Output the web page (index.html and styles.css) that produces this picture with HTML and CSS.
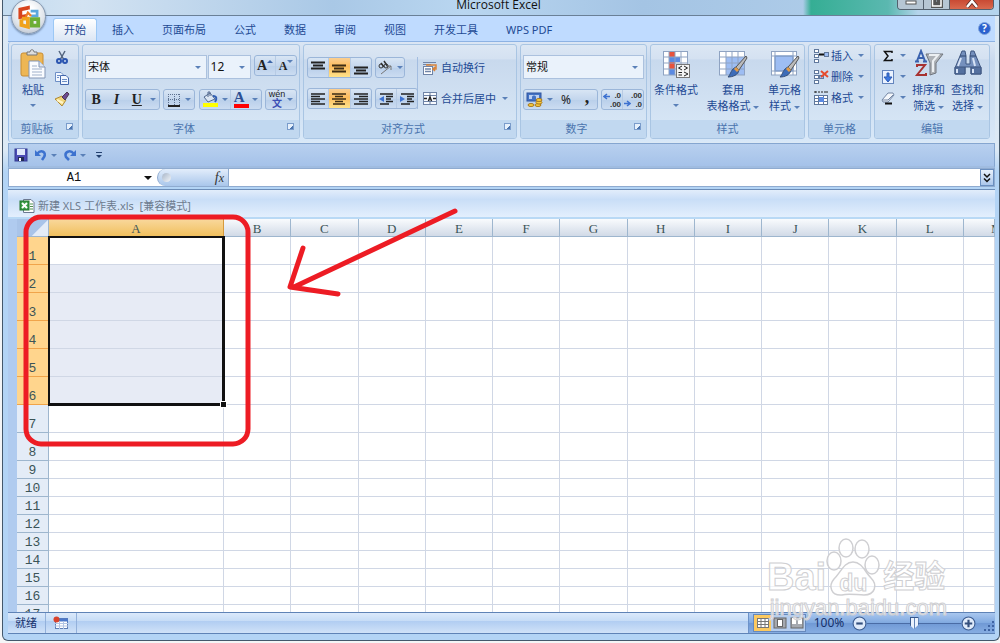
FILE: index.html
```html
<!DOCTYPE html>
<html lang="zh-CN">
<head>
  <meta charset="UTF-8" />
  <title>Microsoft Excel</title>
  <link rel="stylesheet" href="styles.css">
</head>
<body>
  <div class="window">
    <!-- Title bar -->
    <header class="titlebar">
      <span class="title">Microsoft Excel</span>
      <div class="window-buttons">
        <button class="win-btn" aria-label="最小化"><svg width="12" height="6" viewBox="0 0 12 6"><rect x="1" y="1" width="10" height="3" fill="#fff" stroke="#555" /></svg></button>
        <button class="win-btn" aria-label="还原"><svg width="12" height="8" viewBox="0 0 12 8"><path d="M1 0V6.500H10.500V0M4 0V3.500H7.500V0" fill="none" stroke="#555" stroke-width="3" /><path d="M1.500 0V6H10V0" fill="none" stroke="#fff" stroke-width="1.500" /></svg></button>
        <button class="win-btn close" aria-label="关闭"><svg width="12" height="8" viewBox="0 0 12 8"><path d="M1 7L6 1L11 7" fill="none" stroke="#5a2b25" stroke-width="4" /><path d="M1 7L6 1L11 7" fill="none" stroke="#fff" stroke-width="2.500" /></svg></button>
      </div>
    </header>

    <button class="office-button" aria-label="Office 按钮">
      <svg width="26" height="26" viewBox="0 0 24 24" fill="none" stroke-width="3.500">
        <path d="M11 5V3.500L4 5V12L10 11" stroke="#d8441c" />
        <path d="M13.500 6.500H19.500V11H14" stroke="#5aa7dc" stroke-width="2.500" />
        <path d="M5 14V19.500L11 21V13.500H5.500" stroke="#f0a21c" />
        <path d="M14.500 14H20.500V20H14.500Z" stroke="#6cae35" />
        <path d="M9 12L11 8L14 11" stroke="#f07c24" stroke-width="2" />
      </svg>
    </button>

    <!-- Ribbon tabs -->
    <nav class="tabs">
      <button class="tab active">开始</button>
      <button class="tab">插入</button>
      <button class="tab">页面布局</button>
      <button class="tab">公式</button>
      <button class="tab">数据</button>
      <button class="tab">审阅</button>
      <button class="tab">视图</button>
      <button class="tab">开发工具</button>
      <button class="tab">WPS PDF</button>
      <button class="help" aria-label="帮助">?</button>
    </nav>

    <!-- Ribbon -->
    <div class="ribbon">
      <section class="group clipboard">
        <div class="group-body">
          <button class="big-btn">
            <svg width="28" height="30" viewBox="0 0 28 30">
              <rect x="2" y="4" width="22" height="23" rx="2" fill="#edb654" stroke="#c98d33" />
              <path d="M8 6V3H11C11 0 15 0 15 3H18V6Z" fill="#ddd" stroke="#777" />
              <path d="M10 12H20L26 18V29H10Z" fill="#fafcff" stroke="#8396b5" />
              <path d="M20 12V18H26" fill="#dbe4f2" stroke="#8396b5" />
              <path d="M13 17H18M13 20H23M13 23H23M13 26H23" stroke="#9fb0ca" />
            </svg>
            <span>粘贴</span>
            <i class="caret"></i>
          </button>
          <div class="mini-stack">
            <button aria-label="剪切"><svg width="16" height="16" viewBox="0 0 16 16" fill="none"><path d="M5 2L10 11M11 2L6 11" stroke="#54657f" stroke-width="1.500" /><circle cx="5" cy="12" r="2" stroke="#2b55b0" stroke-width="2" /><circle cx="11" cy="12" r="2" stroke="#2b55b0" stroke-width="2" /></svg></button>
            <button aria-label="复制"><svg width="16" height="16" viewBox="0 0 16 16"><path d="M1.500 2.500H7L9.500 5V11.500H1.500Z" fill="#f2f7ff" stroke="#6d8fc6" /><path d="M6.500 5.500H12L14.500 8V14.500H6.500Z" fill="#f2f7ff" stroke="#4468ad" /><path d="M3 5.500H6M3 7.500H5M8 9.500H13M8 11.500H13" stroke="#6d8fc6" /></svg></button>
            <button aria-label="格式刷"><svg width="16" height="16" viewBox="0 0 16 16"><path d="M1 8L8 5L12 9L8 15Z" fill="#f1d67b" stroke="#b08a35" /><path d="M3 9L9 12" stroke="#fff5c8" stroke-width="2" /><path d="M8 6L13 1L15 3L11 9Z" fill="#6b4a91" stroke="#4f3a50" /></svg></button>
          </div>
        </div>
        <div class="caption">剪贴板<i class="launcher"></i></div>
      </section>

      <section class="group font">
        <div class="group-body rows">
          <div class="row">
            <span class="combo font-name"><select aria-label="字体"><option>宋体</option></select></span>
            <span class="combo font-size"><select aria-label="字号"><option>12</option></select></span>
            <div class="segment sizes">
              <button class="serif grow">A<i class="up"></i></button>
              <button class="serif shrink">A<i class="caret"></i></button>
            </div>
          </div>
          <div class="row">
            <div class="segment biu">
              <button class="serif">B</button>
              <button class="serif italic">I</button>
              <button class="serif underline">U</button>
              <button class="drop" aria-label="下划线选项"><i class="caret"></i></button>
            </div>
            <div class="segment pair">
              <button aria-label="边框"><svg width="14" height="14" viewBox="0 0 14 14"><path d="M1.500 1V13M7.500 1V13M12.500 1V13M1 1.500H13M1 6.500H13" stroke="#5d718f" stroke-dasharray="1 1" /><path d="M1 13H13" stroke="#222" stroke-width="2" /></svg><i class="caret"></i></button>
            </div>
            <div class="segment colors">
              <button aria-label="填充颜色"><svg width="16" height="17" viewBox="0 0 16 17"><path d="M2 6L8 2L13 8L6 11Z" fill="#dbe6f3" stroke="#52698e" /><path d="M6 6V1H8V5" fill="none" stroke="#52698e" /><path d="M11 5C15 5 15 8 13 11" fill="none" stroke="#315fb3" stroke-width="2" /><rect x="1" y="12" width="15" height="4" fill="#ffff00" /></svg><i class="caret"></i></button>
              <button class="serif color-a" aria-label="字体颜色">A<i class="caret"></i></button>
            </div>
            <div class="segment pair">
              <button class="phonetic"><span>wén<b>文</b></span><i class="caret"></i></button>
            </div>
          </div>
        </div>
        <div class="caption">字体<i class="launcher"></i></div>
      </section>

      <section class="group align">
        <div class="group-body">
          <div class="align-left">
            <div class="row">
              <div class="segment three">
                <button aria-label="顶端对齐"><svg width="14" height="14" viewBox="0 0 14 14"><path d="M0 1.500H14M2 4.500H12M0 7.500H14" stroke="#222" stroke-width="2" /></svg></button>
                <button class="on" aria-label="垂直居中"><svg width="14" height="14" viewBox="0 0 14 14"><path d="M0 4.500H14M2 7.500H12M0 10.500H14" stroke="#3d2d15" stroke-width="2" /></svg></button>
                <button aria-label="底端对齐"><svg width="14" height="14" viewBox="0 0 14 14"><path d="M0 6.500H14M2 9.500H12M0 12.500H14" stroke="#222" stroke-width="2" /></svg></button>
              </div>
              <div class="segment orient">
                <button aria-label="方向"><svg width="16" height="16" viewBox="0 0 16 16" fill="none" stroke="#333"><circle cx="4" cy="6" r="2" /><path d="M4 3L7 7M7 1L11 7" stroke-width="1.500" /><circle cx="9" cy="6" r="2" /><path d="M4 14L14 6M14 10V6H10" stroke="#777" /></svg><i class="caret"></i></button>
              </div>
            </div>
            <div class="row">
              <div class="segment three">
                <button aria-label="左对齐"><svg width="14" height="14" viewBox="0 0 14 14"><path d="M0 2H14M0 4.500H9M0 7H14M0 9.500H9M0 12H14" stroke="#222" stroke-width="1.500" /></svg></button>
                <button class="on" aria-label="居中"><svg width="14" height="14" viewBox="0 0 14 14"><path d="M0 2H14M3 4.500H11M0 7H14M3 9.500H11M1 12H13" stroke="#3d2d15" stroke-width="1.500" /></svg></button>
                <button aria-label="右对齐"><svg width="14" height="14" viewBox="0 0 14 14"><path d="M0 2H14M5 4.500H14M0 7H14M5 9.500H14M0 12H14" stroke="#222" stroke-width="1.500" /></svg></button>
              </div>
              <div class="segment two">
                <button aria-label="减少缩进量"><svg width="16" height="14" viewBox="0 0 16 14"><path d="M2 2H15M8 4.500H15M8 7H13M8 9.500H15M2 12H11" stroke="#222" stroke-width="1.500" /><path d="M6 4L1 7L6 10Z" fill="#3c71d0" /></svg></button>
                <button aria-label="增加缩进量"><svg width="16" height="14" viewBox="0 0 16 14"><path d="M2 2H15M8 4.500H15M8 7H13M8 9.500H15M2 12H11" stroke="#222" stroke-width="1.500" /><path d="M1 4L6 7L1 10Z" fill="#3c71d0" /></svg></button>
              </div>
            </div>
          </div>
          <div class="align-right">
            <button class="text-btn"><svg width="16" height="16" viewBox="0 0 16 16"><path d="M1 2.500H14M1 4.500H9" stroke="#6f84a7" /><rect x="1.500" y="6.500" width="9" height="8" fill="#fff" stroke="#6f84a7" /><path d="M3 9H9M3 11.500H9" stroke="#6f84a7" stroke-width="1.500" /><path d="M4 5H14V9H11M13 7L11 9L13 11" fill="none" stroke="#d9843b" stroke-width="1.500" /></svg><span>自动换行</span></button>
            <button class="text-btn"><svg width="16" height="16" viewBox="0 0 16 16"><rect x="1.500" y="1.500" width="13" height="12" fill="#f8fbff" stroke="#6f84a7" /><path d="M8 1V4M8 11V14M1 4.500H15M1 10.500H15" stroke="#6f84a7" /><path d="M2 7.500H5M11 7.500H14M6.500 10L8 6L9.500 10" fill="none" stroke="#222" stroke-width="1.500" /></svg><span>合并后居中</span><i class="caret"></i></button>
          </div>
        </div>
        <div class="caption">对齐方式<i class="launcher"></i></div>
      </section>

      <section class="group number">
        <div class="group-body rows">
          <div class="row">
            <span class="combo format"><select aria-label="数字格式"><option>常规</option></select></span>
          </div>
          <div class="row">
            <div class="segment money">
              <button aria-label="会计数字格式"><svg width="17" height="17" viewBox="0 0 17 17"><rect x="1" y="2" width="14" height="8" fill="#4473c4" stroke="#2f55a0" /><rect x="3" y="4" width="10" height="4" fill="#bcd0f2" /><path d="M6 6C6 4 10 4 10 6V8H6Z" fill="#4473c4" /><g fill="#f7cb3e" stroke="#a87920"><ellipse cx="12" cy="14" rx="3" ry="1.500" /><ellipse cx="13" cy="11.500" rx="3" ry="1.500" /><ellipse cx="13" cy="9" rx="3" ry="1.500" /><ellipse cx="5" cy="14" rx="3" ry="1.500" /></g></svg><i class="caret"></i></button>
              <button class="percent">%</button>
              <button class="serif comma">,</button>
            </div>
            <div class="segment two decimals">
              <button aria-label="增加小数位数"><svg width="7" height="16" viewBox="0 0 7 16"><path d="M7 4.500H2M4 2L1 4.500L4 7" fill="none" stroke="#3c71d0" stroke-width="1.500" /></svg><span>.0<br>.00</span></button>
              <button aria-label="减少小数位数"><svg width="7" height="16" viewBox="0 0 7 16"><path d="M0 11.500H5M3 9L6 11.500L3 14" fill="none" stroke="#3c71d0" stroke-width="1.500" /></svg><span>.00<br>.0</span></button>
            </div>
          </div>
        </div>
        <div class="caption">数字<i class="launcher"></i></div>
      </section>

      <section class="group styles">
        <div class="group-body">
          <button class="big-btn wide">
            <svg width="30" height="30" viewBox="0 0 30 30"><rect x="2" y="2" width="25" height="24" fill="#fff" /><rect x="8" y="2" width="6" height="24" fill="#e8533c" /><rect x="8" y="8" width="11" height="5" fill="#5b8ae2" /><rect x="8" y="20" width="6" height="6" fill="#5b8ae2" /><path d="M2 2.500H27M2 8H27M2 14H27M2 20H27M2 26H27M2.500 2V26M8 2V26M14 2V26M20 2V26M26.500 2V26" stroke="#8fa3c2" /><rect x="15.500" y="15.500" width="13" height="13" fill="#f4f4f4" stroke="#777" /><path d="M21 17L17.500 19L21 21M23 17L26.500 19L23 21M17.500 23.500H21M17.500 26H21M23 23L27 25L23 27" fill="none" stroke="#222" /></svg>
            <span>条件格式</span>
            <i class="caret"></i>
          </button>
          <button class="big-btn wide">
            <svg width="30" height="30" viewBox="0 0 30 30"><rect x="1" y="2" width="26" height="24" fill="#fff" /><rect x="8" y="8" width="19" height="18" fill="#9dbdf3" /><path d="M1 2.500H27M1 8H27M1 14H27M1 20H27M1 26H27M1.500 2V26M8 2V26M14 2V26M20 2V26M26.500 2V26" stroke="#8fa3c2" /><path d="M28 7L29 9L21 21L18 18Z" fill="#bbb" stroke="#555" /><path d="M18 18L21 21C20 26 15 28 10 28C13 25 13 20 18 18Z" fill="#3c6cb8" stroke="#365078" /><path d="M17 19L20 22" stroke="#e39b45" stroke-width="3" /></svg>
            <span>套用<br>表格格式 <i class="caret"></i></span>
          </button>
          <button class="big-btn wide">
            <svg width="30" height="30" viewBox="0 0 30 30"><rect x="1" y="2" width="26" height="24" fill="#fff" /><rect x="5" y="7" width="18" height="15" fill="#9dbdf3" stroke="#5f88ca" /><path d="M1 2.500H27M1 26H27M1.500 2V26M26.500 2V26M5 2V26M23 2V26M1 7H27M1 22H27" stroke="#8fa3c2" /><path d="M28 7L29 9L21 21L18 18Z" fill="#bbb" stroke="#555" /><path d="M18 18L21 21C20 26 15 28 10 28C13 25 13 20 18 18Z" fill="#3c6cb8" stroke="#365078" /><path d="M17 19L20 22" stroke="#e39b45" stroke-width="3" /></svg>
            <span>单元格<br>样式 <i class="caret"></i></span>
          </button>
        </div>
        <div class="caption">样式</div>
      </section>

      <section class="group cells">
        <div class="group-body stack">
          <button class="text-btn"><svg width="16" height="16" viewBox="0 0 16 16" fill="#fff" stroke="#60789c"><rect x="1.500" y="1.500" width="4" height="3" /><rect x="1.500" y="6.500" width="4" height="3" /><rect x="1.500" y="11.500" width="4" height="3" /><rect x="11.500" y="4.500" width="4" height="4" fill="#9dbdf3" /><path d="M6 6.500H11" stroke="#111" stroke-width="2" /></svg><span>插入</span><i class="caret"></i></button>
          <button class="text-btn"><svg width="16" height="16" viewBox="0 0 16 16" fill="#fff" stroke="#60789c"><rect x="1.500" y="1.500" width="4" height="3" /><rect x="1.500" y="6.500" width="4" height="3" /><rect x="1.500" y="11.500" width="4" height="3" /><rect x="6.500" y="6.500" width="4" height="3" fill="#9dbdf3" /><path d="M8 2L15 8M15 2L8 8" stroke="#e64b2d" stroke-width="2" /></svg><span>删除</span><i class="caret"></i></button>
          <button class="text-btn"><svg width="16" height="16" viewBox="0 0 16 16" fill="#fff" stroke="#60789c"><path d="M2 1V3M14 1V3M2 2H14" stroke="#222" stroke-dasharray="2 1" /><rect x="1.500" y="5.500" width="13" height="9" /><path d="M1 8.500H15M1 11.500H15M5.500 5V15M10.500 5V15" /><rect x="6" y="7" width="5" height="5" fill="#5b8ae2" stroke="none" /></svg><span>格式</span><i class="caret"></i></button>
        </div>
        <div class="caption">单元格</div>
      </section>

      <section class="group editing">
        <div class="group-body">
          <div class="stack">
            <button class="text-btn" aria-label="求和"><svg width="16" height="16" viewBox="0 0 16 16"><path d="M12 5V3.500H4.500L8 8L4.500 12.500H12V11" fill="none" stroke="#111" stroke-width="1.500" /></svg><i class="caret"></i></button>
            <button class="text-btn" aria-label="填充"><svg width="16" height="16" viewBox="0 0 16 16"><rect x="2.500" y="1.500" width="11" height="13" fill="#eaf2ff" stroke="#6485bd" /><path d="M7 4H9V8H12L8 13L4 8H7Z" fill="#3e78e0" stroke="#2c5cb4" /></svg><i class="caret"></i></button>
            <button class="text-btn" aria-label="清除"><svg width="16" height="16" viewBox="0 0 16 16"><path d="M2 10L8 3H13L14 5L8 12H3Z" fill="#f4f7fb" stroke="#7487a5" /><path d="M3 10H8L13 5" fill="none" stroke="#7487a5" /><path d="M5 13.500H12" stroke="#111" stroke-width="2" /></svg><i class="caret"></i></button>
          </div>
          <button class="big-btn">
            <svg width="30" height="30" viewBox="0 0 30 30"><path d="M12 5H29L22 14V24L16 26V14Z" fill="#aeb2b7" stroke="#70757c" /><path d="M15 6H24L19 12V23" fill="none" stroke="#eceff2" stroke-width="2" /><path d="M3 12L7 2L11 12M5 9H10M1 12.500H5M9 12.500H13" fill="none" stroke="#3b62ae" stroke-width="2" /><path d="M3 18V16H11L3 26H12V24" fill="none" stroke="#a73232" stroke-width="2" /></svg>
            <span>排序和<br>筛选 <i class="caret"></i></span>
          </button>
          <button class="big-btn">
            <svg width="30" height="30" viewBox="0 0 30 30"><g fill="#7590bd" stroke="#3f5680"><path d="M7 7L9 2H12L13 7V15H17V7L18 2H21L23 7L28 19V25H18V18H12V25H2V19Z" /><path d="M2 18H12V25H2ZM18 18H28V25H18Z" fill="#54709f" /></g><path d="M8 9L5 17M20 9L22 17M4 20V24M20 20V24" stroke="#d7e3f6" stroke-width="2" /><path d="M7 7H13M17 7H23" stroke="#30466e" /></svg>
            <span>查找和<br>选择 <i class="caret"></i></span>
          </button>
        </div>
        <div class="caption">编辑</div>
      </section>
    </div>

    <!-- Quick access toolbar -->
    <div class="quick-access">
      <button aria-label="保存"><svg width="14" height="14" viewBox="0 0 14 14"><rect x="1" y="1" width="12" height="12" fill="#4b4bb5" stroke="#333a91" /><rect x="3" y="1" width="8" height="6" fill="#dfe8fb" /><rect x="4" y="9" width="6" height="4" fill="#222b55" /><rect x="5" y="10" width="2" height="3" fill="#fff" /></svg></button>
      <button aria-label="撤消"><svg width="14" height="14" viewBox="0 0 14 14"><path d="M3 6C7 1 13 4 10 9L8 12" fill="none" stroke="#3d72cf" stroke-width="2.500" /><path d="M1 2V8H7Z" fill="#3d72cf" /></svg></button>
      <i class="caret"></i>
      <button aria-label="恢复"><svg width="14" height="14" viewBox="0 0 14 14"><path d="M11 6C7 1 1 4 3 9L6 12" fill="none" stroke="#3d72cf" stroke-width="2.500" /><path d="M13 2V8H7Z" fill="#3d72cf" /></svg></button>
      <i class="caret"></i>
      <button class="customize" aria-label="自定义快速访问工具栏"><i class="caret"></i></button>
    </div>

    <!-- Formula bar -->
    <div class="formula-bar">
      <div class="name-box">
        <input type="text" value="A1" aria-label="名称框">
        <button aria-label="名称列表"><i class="caret"></i></button>
      </div>
      <div class="fx-area"><span class="knob"></span><button class="fx">f<small>x</small></button></div>
      <input class="formula" type="text" aria-label="编辑栏">
      <button class="expand" aria-label="展开编辑栏"><svg width="8" height="10" viewBox="0 0 8 10"><path d="M1 1L4 4L7 1M1 5.500L4 8.500L7 5.500" fill="none" stroke="#111" stroke-width="1.500" /></svg></button>
    </div>

    <!-- Workbook -->
    <main class="workbook">
      <div class="book-title">
        <svg width="16" height="16" viewBox="0 0 16 16"><path d="M4.500 1.500H12L15 4.500V14.500H4.500Z" fill="#fff" stroke="#6b7890" /><path d="M11 6H14M11 8.500H14M11 11H14" stroke="#4e9150" /><rect x="1" y="3" width="9" height="9" fill="#3a9b43" stroke="#23752e" /><path d="M3 5L8 10M8 5L3 10" stroke="#fff" stroke-width="2" /></svg>
        <span>新建 XLS 工作表.xls&nbsp; [兼容模式]</span>
      </div>
      <div class="sheet">
        <table class="grid">
          <colgroup id="cols"></colgroup>
          <thead><tr id="letters"></tr></thead>
          <tbody id="rows"></tbody>
        </table>
        <div class="selection"></div>
      </div>
    </main>

    <!-- Status bar -->
    <footer class="status">
      <span class="ready">就绪</span>
      <button class="macro" aria-label="录制宏"><svg width="16" height="14" viewBox="0 0 16 14"><rect x="2.500" y="2.500" width="12" height="10" fill="#fff" stroke="#5d7db5" /><path d="M2 4H15" stroke="#4c78c9" stroke-width="3" /><path d="M2 7.500H15M2 10H15M6.500 5V13M10.500 5V13" stroke="#b3c5e4" /><circle cx="3.500" cy="3.500" r="3" fill="#d9432c" /></svg></button>
      <div class="view-zone">
        <div class="views">
          <button class="on" aria-label="普通"><svg width="14" height="12" viewBox="0 0 14 12"><rect x="1" y="1" width="12" height="10" fill="#fff" /><path d="M1 1.500H13M1 4.500H13M1 7.500H13M1 10.500H13M1.500 1V11M5 1V11M9 1V11M12.500 1V11" stroke="#777" /></svg></button>
          <button aria-label="页面布局"><svg width="14" height="12" viewBox="0 0 14 12"><rect x="1" y="1" width="12" height="10" fill="#a5a9b0" stroke="#666" /><rect x="4.500" y="2.500" width="5" height="7" fill="#fff" stroke="#666" /></svg></button>
          <button aria-label="分页预览"><svg width="14" height="12" viewBox="0 0 14 12"><rect x="1" y="1" width="12" height="10" fill="#a5a9b0" stroke="#666" /><rect x="2" y="1" width="4" height="6" fill="#fff" /><rect x="8" y="1" width="4" height="6" fill="#fff" /></svg></button>
        </div>
        <button class="percent-btn">100%</button>
        <button class="round" aria-label="缩小"><svg width="15" height="15" viewBox="0 0 14 14"><circle cx="7" cy="7" r="6" fill="#dfeafa" stroke="#3c5c90" /><path d="M4 7H10" stroke="#344f7d" stroke-width="2" /></svg></button>
        <input class="zoom" type="range" min="10" max="190" value="100" aria-label="显示比例">
        <button class="round" aria-label="放大"><svg width="15" height="15" viewBox="0 0 14 14"><circle cx="7" cy="7" r="6" fill="#dfeafa" stroke="#3c5c90" /><path d="M3.500 7H10.500M7 3.500V10.500" stroke="#344f7d" stroke-width="2" /></svg></button>
        <svg class="grip" width="12" height="12" viewBox="0 0 12 12" fill="#3f64a3"><path d="M9 1h2v2h-2zM5 5h2v2h-2zM9 5h2v2h-2zM1 9h2v2h-2zM5 9h2v2h-2zM9 9h2v2h-2z" /></svg>
      </div>
    </footer>
  </div>

  <!-- Hand-drawn notes over the sheet -->
  <svg class="markup" width="440" height="240" viewBox="0 0 440 240" fill="none" stroke="#ed1c24" stroke-width="5" stroke-linecap="round" stroke-linejoin="round">
    <rect x="6" y="10" width="222" height="227" rx="15" />
    <path d="M435 4L274 80M283 41L270 80L318 87" />
  </svg>

  <div class="watermark">
    <div class="brand">
      <span>Bai</span>
      <span class="paw">
        <svg width="54" height="60" viewBox="0 0 54 60" fill="#fff" fill-opacity="0.600" stroke="#cfcfd2" stroke-width="1.500"><ellipse cx="8" cy="24" rx="7" ry="9" /><ellipse cx="20" cy="11" rx="7" ry="9" /><ellipse cx="36" cy="12" rx="7" ry="9" /><ellipse cx="46" cy="28" rx="7" ry="9" /><path d="M27 25C36 25 39 35 45 41C52 48 49 58 38 58C31 58 22 56 16 58C5 59 2 49 8 42C15 35 18 25 27 25Z" /></svg>
        <b>du</b>
      </span>
      <span class="jingyan">经验</span>
    </div>
    <div class="site">jingyan.baidu.com</div>
  </div>

  <script>
    const letters = "ABCDEFGHIJKLM".split("");
    const rowCount = 17;
    const selectedRows = 6;

    const cols = document.getElementById("cols");
    const head = document.getElementById("letters");
    cols.innerHTML = '<col class="col-head">' +
      letters.map(l => `<col class="col-${l.toLowerCase()}">`).join("");
    head.innerHTML = '<th class="corner"></th>' +
      letters.map(l => `<th class="${l === "A" ? "picked" : l === "M" ? "cut" : ""}">${l}</th>`).join("");

    const body = document.getElementById("rows");
    for (let i = 1; i <= rowCount; i++) {
      const tr = document.createElement("tr");
      if (i <= 8) tr.classList.add("tall");
      const picked = i <= selectedRows;
      tr.innerHTML = `<th class="${picked ? "picked" : ""}">${i}</th>` +
        letters.map((l, n) => `<td class="${picked && n === 0 && i > 1 ? "shade" : ""}"></td>`).join("");
      body.appendChild(tr);
    }
  </script>
</body>
</html>
```

FILE: styles.css
```css
* {
  box-sizing: border-box;
}
body {
  margin: 0;
  height: 100vh;
  padding: 0 0 2px 2px;
  overflow: hidden;
  position: relative;
  background: #f4f5f6;
  font-family: "Noto Sans", "Noto Sans CJK SC", sans-serif;
  font-size: 11px;
  line-height: 16px;
  color: #1e4a94;
}
button,
input,
select {
  margin: 0;
  padding: 0;
  border: 0;
  background: none;
  font: inherit;
  color: inherit;
  outline: none;
}
svg {
  display: block;
  flex: none;
}
.window {
  height: 100%;
  display: flex;
  flex-direction: column;
  position: relative;
  padding: 0 4px 6px 5px;
  border: 1px solid #44586b;
  border-top: 0;
  border-radius: 0 0 6px 6px;
  background: linear-gradient(#dbe8f3 0, #dce9f5 150px, #b3d4f5 172px, #b3d4f5 100%);
}

/* Title bar */
.titlebar {
  flex: none;
  height: 16px;
  margin: 0 -4px 0 -5px;
  padding-right: 5px;
  display: grid;
  grid-template-columns: 1fr auto 1fr;
  background:
    linear-gradient(90deg, transparent 800px, #35ae94 808px, #5bb8b0 885px, #b5d4ec 915px),
    linear-gradient(90deg, #c4dcf0, #d3e3f2 80px, #a9c8e6 330px, #b9d6f0 460px, #a4c4e4 640px, #b7d3ed);
  border-bottom: 1px solid #6a8097;
}
.title {
  grid-column: 2;
  line-height: 10px;
  font-family: "Open Sans", sans-serif;
  font-size: 12px;
  color: #111;
}
.window-buttons {
  justify-self: end;
  display: flex;
  height: 10px;
  border: 1px solid #53606e;
  border-top: 0;
  border-radius: 0 0 4px 4px;
  overflow: hidden;
}
.win-btn {
  width: 26px;
  display: flex;
  justify-content: center;
  background: #b6c6d4;
  border-right: 1px solid #53606e;
}
.win-btn.close {
  width: 43px;
  border: 0;
  background: linear-gradient(#c94a33, #d9694e);
}
.office-button {
  position: absolute;
  left: 8px;
  top: -1px;
  width: 35px;
  height: 35px;
  border-radius: 50%;
  border: 1px solid #8497ae;
  background: radial-gradient(circle at 50% 35%, #fff 20%, #dfe4ea 60%, #a9b4c4 100%);
  box-shadow: 0 1px 2px #6c85a6;
  display: flex;
  align-items: center;
  justify-content: center;
}

/* Tabs */
.tabs {
  flex: none;
  height: 26px;
  display: flex;
  align-items: flex-end;
  padding-left: 45px;
  background: #bfdbff;
  border-bottom: 1px solid #8db2e3;
}
.tab {
  height: 23px;
  padding: 0 14px;
  line-height: 20px;
  white-space: nowrap;
}
.tab.active {
  padding: 0 10px;
  margin-right: 1px;
  border: 1px solid #9cc8f5;
  border-bottom: 0;
  border-radius: 3px 3px 0 0;
  background: linear-gradient(#fff, #dbe6f4);
}
.help {
  width: 13px;
  height: 13px;
  margin: 0 4px 6px auto;
  border-radius: 50%;
  border: 1px solid #7fa3dc;
  background: #2b62cf;
  color: #fff;
  font-size: 10px;
  font-weight: bold;
  line-height: 11px;
}

/* Ribbon */
.ribbon {
  flex: none;
  display: flex;
  gap: 3px;
  padding: 2px 2px 3px;
  background: linear-gradient(#dbe6f4, #c8d9ee 20%, #d8e8f8);
  border-left: 1px solid #9cbfe8;
  border-radius: 3px;
}
.group {
  flex: none;
  border: 1px solid #a9c5e3;
  border-radius: 3px;
  background: linear-gradient(#dce7f4, #d4e1f1 15%, #c8d9ed 16%, #d9e8f7);
  overflow: hidden;
}
.group-body {
  height: 75px;
  display: flex;
  position: relative;
}
.caption {
  height: 18px;
  line-height: 18px;
  text-align: center;
  background: #c1d8f0;
  color: #4a74ae;
  position: relative;
}
.launcher {
  position: absolute;
  right: 5px;
  top: 3px;
  width: 7px;
  height: 7px;
  border: 1px solid #7a9ccb;
  background: linear-gradient(135deg, #e6f0fb 60%, #4a74ae 61%);
}
.clipboard { width: 68px; }
.clipboard .caption { padding-right: 16px; }
.font { width: 218px; }
.font .caption { padding-right: 14px; }
.align { width: 214px; }
.align .caption { padding-right: 14px; }
.number { width: 127px; }
.number .caption { padding-right: 14px; }
.styles { width: 155px; }
.cells { width: 63px; }
.editing { width: 116px; }

.caret {
  flex: none;
  display: inline-block;
  border: 3px solid transparent;
  border-top-color: #5a80b8;
  border-bottom: 0;
}
.big-btn {
  display: flex;
  flex-direction: column;
  align-items: center;
  padding-top: 4px;
  white-space: nowrap;
}
.big-btn span {
  margin-top: 3px;
  line-height: 16px;
}
.big-btn .caret {
  vertical-align: middle;
}
.big-btn > .caret {
  margin-top: 6px;
}
.clipboard .big-btn {
  width: 42px;
}
.mini-stack {
  display: flex;
  flex-direction: column;
  gap: 5px;
  padding-top: 4px;
}
.rows {
  flex-direction: column;
  gap: 10px;
  padding: 10px 2px 0;
}
.row {
  display: flex;
}
.rows .row:first-child {
  height: 24px;
  gap: 1px;
}
.rows .row:last-child {
  justify-content: space-between;
}
.combo {
  height: 24px;
  position: relative;
  background: #eaf2fb;
  border: 1px solid #abc1de;
}
.combo::after {
  content: "";
  position: absolute;
  right: 5px;
  top: 10px;
  border: 3px solid transparent;
  border-top-color: #5a80b8;
  border-bottom: 0;
  pointer-events: none;
}
.combo select {
  width: 100%;
  height: 100%;
  padding: 0 2px;
  appearance: none;
  color: #111;
}
.font-name { width: 123px; }
.font-size { width: 44px; }
.font-size select { font-size: 12px; }
.format { width: 100%; }
.segment {
  flex: none;
  height: 21px;
  display: flex;
  border: 1px solid #9bb6d9;
  border-radius: 3px;
  background: linear-gradient(#d8e5f4, #c3d6ed 50%, #b9cfea 51%, #cbdcf1);
}
.segment button {
  flex: 1;
  display: flex;
  align-items: center;
  justify-content: center;
  gap: 4px;
}
.segment button + button {
  border-left: 1px solid #b7cbe4;
}
.segment .on {
  background: linear-gradient(#fbcf92, #fdbc5c 45%, #ffe38b);
}
.sizes {
  width: 43px;
  margin-left: 2px;
}
.segment .grow,
.segment .shrink {
  gap: 0;
  align-items: flex-start;
  line-height: 20px;
}
.segment .shrink {
  font-size: 12px;
}
.grow .up {
  margin-top: 4px;
  border: 3px solid transparent;
  border-top: 0;
  border-bottom-color: #3d66a8;
}
.shrink .caret {
  margin-top: 4px;
}
.serif {
  font-family: "Liberation Serif", serif;
  font-size: 14px;
  font-weight: bold;
  color: #222;
}
.italic { font-style: italic; }
.underline { text-decoration: underline; }
.biu { width: 75px; }
.biu .drop {
  flex: 0 0 12px;
}
.segment.biu button + button { border: 0; }
.pair { width: 32px; }
.colors { width: 63px; }
.segment .color-a {
  color: #2c4f93;
  background: linear-gradient(#f00, #f00) 3px 14px / 15px 4px no-repeat;
  line-height: 14px;
  font-size: 15px;
  align-items: flex-start;
  gap: 7px;
}
.color-a .caret { margin-top: 8px; }
.segment .phonetic {
  gap: 2px;
}
.phonetic span {
  font-family: "Liberation Sans", "Noto Sans CJK SC", sans-serif;
  font-size: 9px;
  line-height: 8px;
  color: #222;
}
.phonetic b {
  display: block;
  font-size: 10px;
  line-height: 11px;
  color: #3b4fb5;
}

/* Alignment group */
.align-left {
  width: 114px;
  height: 52px;
  margin-top: 12px;
  padding-left: 3px;
  display: flex;
  flex-direction: column;
  gap: 10px;
  border-right: 1px solid #a3bde0;
}
.align-left .row { gap: 3px; }
.three { width: 65px; }
.orient { width: 30px; }
.two { width: 43px; }
.align-right {
  padding: 12px 0 0 4px;
  display: flex;
  flex-direction: column;
  gap: 10px;
}
.text-btn {
  height: 21px;
  display: flex;
  align-items: center;
  gap: 3px;
  white-space: nowrap;
}
.text-btn .caret { margin-left: 3px; }
.money { width: 75px; }
.segment .percent {
  flex: 0 0 22px;
  font-size: 12px;
  color: #222;
}
.segment .comma {
  flex: 0 0 20px;
  font-size: 18px;
  line-height: 10px;
  padding-bottom: 6px;
}
.segment.money button + button { border: 0; }
.segment.decimals button { gap: 0; }
.decimals span {
  font-family: "Liberation Sans", sans-serif;
  font-size: 8px;
  font-weight: bold;
  line-height: 9px;
  color: #333;
  text-align: right;
}

/* Styles, cells and editing groups */
.styles .group-body {
  padding: 0 3px;
  justify-content: space-between;
}
.stack {
  display: flex;
  flex-direction: column;
}
.cells .stack {
  padding: 0 0 0 4px;
}
.cells .text-btn,
.editing .text-btn { gap: 2px; }
.editing .group-body {
  padding: 0 5px;
  justify-content: space-between;
}
.editing .text-btn .caret { margin-left: 2px; }

/* Quick access toolbar */
.quick-access {
  flex: none;
  height: 25px;
  margin-top: 1px;
  padding-left: 5px;
  display: flex;
  align-items: center;
  gap: 6px;
  border: 1px solid #85a6d0;
  border-bottom: 2px solid #a0bce0;
  background: linear-gradient(#b8d0ef, #a5c2e9);
}
.quick-access > .caret { margin-left: -3px; }
.customize {
  margin-left: 4px;
  padding-top: 2px;
  border-top: 1px solid #23406f;
  display: flex;
}
.customize .caret { border-top-color: #23406f; }

/* Formula bar */
.formula-bar {
  flex: none;
  height: 19px;
  display: flex;
  background: #fff;
  border: 1px solid #8fabd0;
}
.name-box {
  width: 148px;
  display: flex;
  align-items: center;
}
.name-box input {
  flex: 1;
  width: 0;
  text-align: center;
  font-family: "Liberation Mono", monospace;
  font-size: 12px;
  color: #111;
}
.name-box button {
  width: 18px;
  display: flex;
  justify-content: center;
}
.name-box .caret {
  border-width: 4px 4px 0;
  border-top-color: #111;
}
.fx-area {
  width: 72px;
  display: flex;
  align-items: center;
  justify-content: space-between;
  padding: 0 4px;
  border: 1px solid #8fabd0;
  border-width: 0 1px;
  border-radius: 9px 0 0 9px;
  background: linear-gradient(#e2edfb, #a9c6eb);
}
.knob {
  width: 9px;
  height: 9px;
  border-radius: 50%;
  background: linear-gradient(135deg, #a7b5c8, #f3f6fa);
}
.fx {
  font: italic 14px/16px "Liberation Serif", serif;
  color: #333;
}
.fx small { font-size: 12px; }
.formula {
  flex: 1;
  min-width: 0;
}
.expand {
  width: 14px;
  display: flex;
  align-items: center;
  justify-content: center;
  border: 1px solid #6a8fc0;
  background: linear-gradient(#e8f1fc, #abc7ec);
}

/* Workbook */
.workbook {
  flex: 1;
  min-height: 0;
  margin-top: 2px;
  padding-left: 9px;
  display: flex;
  flex-direction: column;
  border-top: 1px solid #6c8db8;
  background: #b0cbef;
}
.book-title {
  flex: none;
  height: 29px;
  margin-left: -9px;
  padding: 4px 0 0 11px;
  display: flex;
  align-items: center;
  gap: 3px;
  color: #6d7b8e;
  white-space: nowrap;
  background: linear-gradient(#e2edfb, #c9def7 35%, #e3effd);
  border-bottom: 2px solid #b9d9f5;
}
.sheet {
  flex: 1;
  min-height: 0;
  overflow: hidden;
  position: relative;
  background: #fff;
}
.grid {
  width: 100%;
  table-layout: fixed;
  border-spacing: 0;
  font-family: "Liberation Mono", monospace;
  font-size: 13px;
  line-height: 14px;
}
.col-head { width: 32px; }
.col-a { width: 175px; }
.col-m { width: 31px; }
.grid tr { height: 18px; }
.grid tr.tall { height: 28px; }
.grid th,
.grid td {
  padding: 0;
  border-right: 1px solid #d0d7e5;
  border-bottom: 1px solid #d0d7e5;
}
.grid th {
  font-weight: normal;
  color: #3b5458;
  vertical-align: bottom;
  overflow: hidden;
  border-color: #9eb6ce;
}
.grid thead th {
  background: linear-gradient(#f9fbfd, #d1dae7);
  font-family: "Liberation Serif", serif;
}
.grid thead .picked {
  background: linear-gradient(#f9d89d, #f1c05e);
  border-color: #d69a3c;
}
.grid thead .corner {
  background: linear-gradient(135deg, #a9c4e9 66%, #e4ecf7 67%);
}
.grid thead .cut {
  padding-left: 27px;
  text-align: left;
}
.grid tbody th {
  background: #e4ecf7;
}
.grid tbody .picked {
  background: #ffd58d;
  border-color: #f0a44a;
}
.grid .shade {
  background: #e7ebf5;
}
.selection {
  position: absolute;
  left: 31px;
  top: 17px;
  width: 177px;
  height: 170px;
  border: solid #111;
  border-width: 2px 3px 3px 2px;
}
.selection::after {
  content: "";
  position: absolute;
  right: -4px;
  bottom: -4px;
  width: 5px;
  height: 5px;
  background: #111;
  outline: 1px solid #fff;
}

/* Status bar */
.status {
  flex: none;
  height: 22px;
  display: flex;
  align-items: stretch;
  border: 1px solid #5f83b6;
  border-width: 1px 0;
  background: linear-gradient(#dbe9fb, #c6dcf6 40%, #b1cdf2 41%, #d0e2f8);
}
.ready {
  width: 38px;
  padding-left: 7px;
  line-height: 19px;
  color: #15306b;
  border-right: 1px solid #93b1db;
}
.macro {
  width: 31px;
  display: flex;
  align-items: center;
  justify-content: center;
  border-right: 1px solid #93b1db;
}
.view-zone {
  margin-left: auto;
  width: 247px;
  padding-left: 4px;
  display: flex;
  align-items: center;
  border-left: 1px solid #6c92c9;
  background: linear-gradient(#a9c7ef, #80a9e0 50%, #7099d5 51%, #86ade2);
  color: #15306b;
}
.views {
  display: flex;
  border: 1px solid #6689bd;
  background: #b5cdee;
}
.views button {
  width: 17px;
  height: 16px;
  display: flex;
  align-items: center;
  justify-content: center;
}
.views .on { background: #fcc95f; }
.percent-btn {
  width: 46px;
  font-size: 12px;
}
.round {
  width: 15px;
}
.zoom {
  flex: 1;
  min-width: 0;
  height: 16px;
  appearance: none;
}
.zoom::-webkit-slider-runnable-track {
  height: 12px;
  background: linear-gradient(#4a6ca5, #4a6ca5) center / 100% 1px no-repeat;
}
.zoom::-webkit-slider-thumb {
  appearance: none;
  width: 9px;
  height: 12px;
  background: linear-gradient(90deg, #35568d 1px, #eaf2fd 1px, #eaf2fd 4px, #6082b6 4px, #6082b6 5px, #eaf2fd 5px, #eaf2fd 8px, #35568d 8px);
  border-top: 1px solid #35568d;
  clip-path: polygon(0 0, 100% 0, 100% 65%, 50% 100%, 0 65%);
}
.grip { margin: 6px 0 0 7px; }

/* Overlays */
.markup {
  position: absolute;
  left: 20px;
  top: 207px;
  pointer-events: none;
}
.watermark {
  position: absolute;
  right: 53px;
  bottom: 24px;
  width: 180px;
  pointer-events: none;
  font-family: "Liberation Sans", "Noto Sans CJK SC", sans-serif;
  font-weight: bold;
  color: rgba(255, 255, 255, 0.7);
  -webkit-text-stroke: 1px #cfcfd2;
}
.brand {
  display: flex;
  align-items: flex-end;
  font-size: 38px;
  line-height: 40px;
}
.paw {
  position: relative;
}
.paw b {
  position: absolute;
  left: 13px;
  bottom: 0;
  font-size: 23px;
  line-height: 28px;
}
.jingyan {
  margin-left: 3px;
  font-size: 31px;
}
.site {
  font-size: 22px;
  line-height: 22px;
  font-weight: normal;
  text-align: right;
}
```
